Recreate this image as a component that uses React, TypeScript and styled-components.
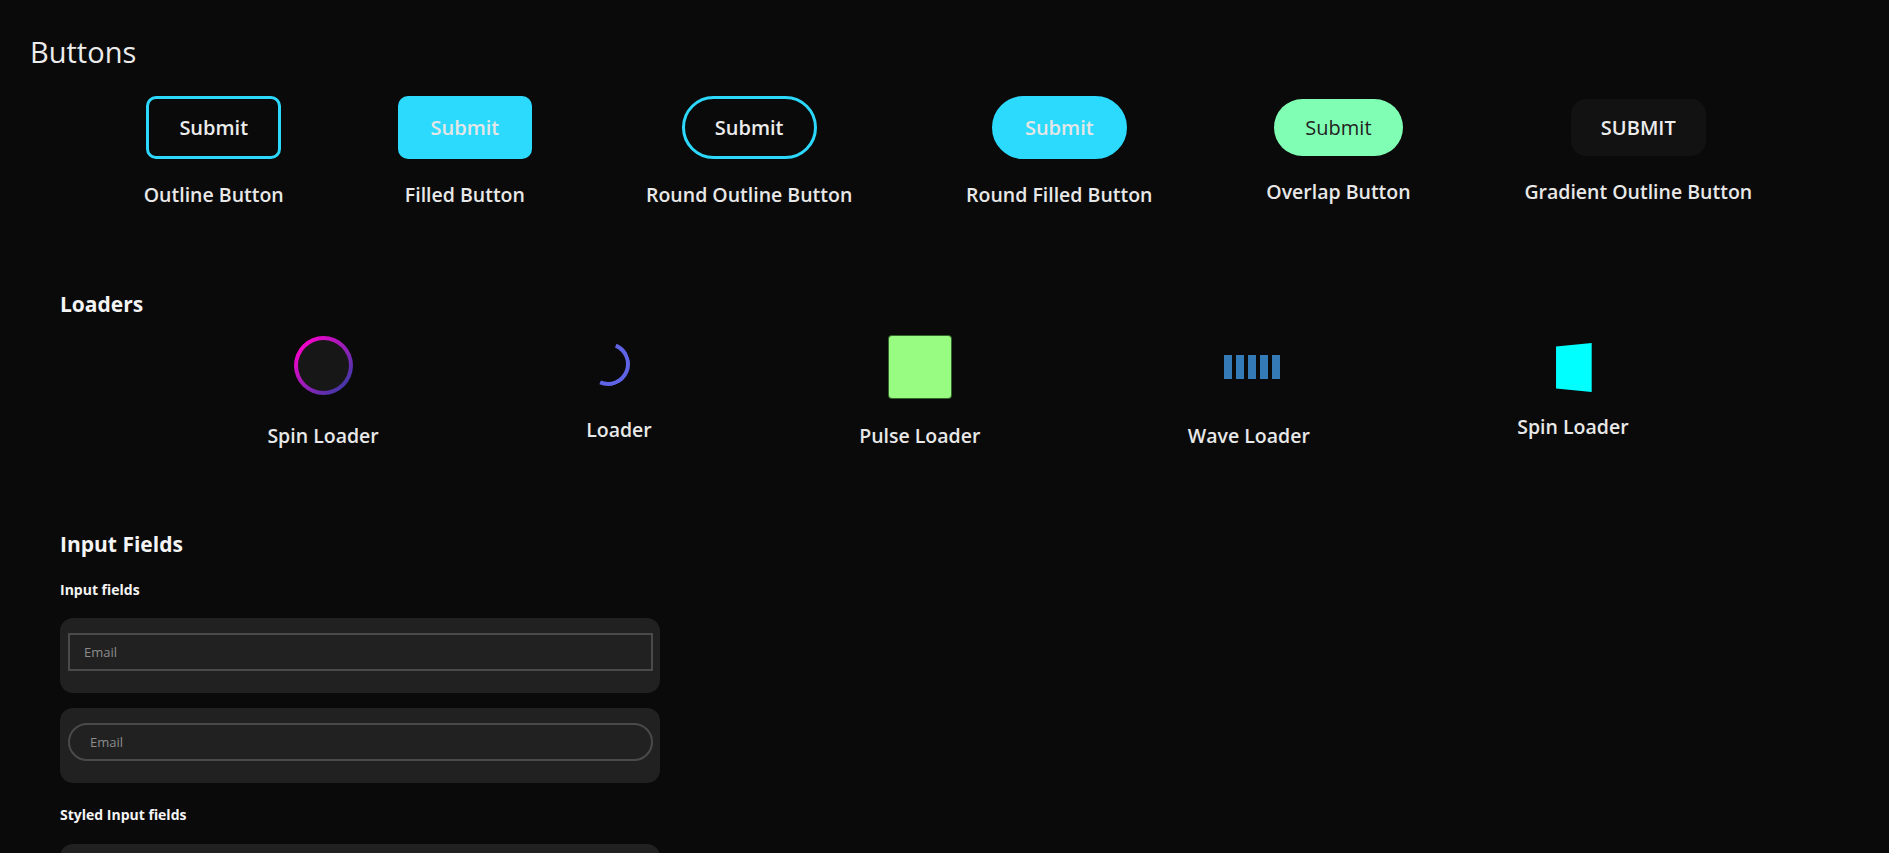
import styled, { createGlobalStyle } from "styled-components";

const GlobalStyle = createGlobalStyle`
  html, body {
    margin: 0;
    padding: 0;
    background: #0a0a0a;
  }
  body {
    font-family: "Open Sans", "Noto Sans", sans-serif;
    color: #ececec;
  }
`;

const Page = styled.div`
  padding: 34px 23px 0 30px;
  min-height: 853px;
  box-sizing: border-box;
`;

const PageTitle = styled.h2`
  margin: 0;
  font-size: 29px;
  font-weight: 500;
  line-height: 35px;
  color: #ececec;
`;

const ButtonRow = styled.div`
  display: flex;
  justify-content: space-evenly;
  align-items: center;
  margin-top: 27px;
`;

const Item = styled.div<{ $gap: number; $align?: string }>`
  display: flex;
  flex-direction: column;
  align-items: ${(p) => p.$align || "center"};
  gap: ${(p) => p.$gap}px;
`;

const Label = styled.div`
  font-size: 19.5px;
  font-weight: 600;
  line-height: 24px;
  color: #e8e8e8;
  white-space: nowrap;
`;

const BaseButton = styled.button`
  font-family: inherit;
  font-size: 20px;
  font-weight: 600;
  line-height: 27px;
  padding: 0 30px;
  cursor: pointer;
  box-sizing: border-box;
`;

const OutlineButton = styled(BaseButton)<{ $round?: boolean }>`
  height: 63px;
  background: transparent;
  color: #ececec;
  border: 3px solid #2cd9fd;
  border-radius: ${(p) => (p.$round ? "32px" : "10px")};
`;

const FilledButton = styled(BaseButton)<{ $round?: boolean }>`
  height: 63px;
  background: #2cdafe;
  color: #e6e6e6;
  border: 3px solid #2cdafe;
  border-radius: ${(p) => (p.$round ? "32px" : "10px")};
`;

const OverlapButton = styled(BaseButton)`
  height: 57px;
  padding: 0 31px;
  border: none;
  border-radius: 29px;
  background: #80ffb4;
  color: #222;
  font-weight: 500;
`;

const GradientButton = styled(BaseButton)`
  height: 57px;
  border: none;
  border-radius: 15px;
  background: #121212;
  color: #ececec;
`;

const Section = styled.section<{ $top: number }>`
  padding: 0 30px;
  margin-top: ${(p) => p.$top}px;
`;

const SectionTitle = styled.h3`
  margin: 0;
  font-size: 21px;
  font-weight: 700;
  line-height: 25px;
  color: #f4f4f4;
`;

const LoaderRow = styled.div`
  display: flex;
  justify-content: space-evenly;
  align-items: center;
  margin-top: 19px;
`;

const SpinRing = styled.div`
  width: 59px;
  height: 59px;
  box-sizing: border-box;
  border-radius: 50%;
  border: 4px solid transparent;
  background: linear-gradient(#171717, #171717) padding-box,
    linear-gradient(135deg, #ff00cc 10%, #3a3aa6 90%) border-box;
`;

const ArcLoader = styled.div`
  width: 44px;
  height: 44px;
  box-sizing: border-box;
  border-radius: 50%;
  border: 4px solid transparent;
  border-right-color: #5f63e6;
  border-bottom-color: #5f63e6;
  transform: rotate(-22deg);
`;

const PulseBox = styled.div`
  width: 62px;
  height: 62px;
  border-radius: 3px;
  background: #98fb82;
  box-shadow: 0 0 0 1px rgba(70, 140, 55, 0.7);
`;

const WaveBox = styled.div`
  height: 60px;
  display: flex;
  align-items: center;
  gap: 4px;
  margin-left: 6px;
`;

const WaveBar = styled.span`
  display: block;
  width: 8px;
  height: 24px;
  background: #337ab7;
`;

const FlipSquare = styled.div`
  width: 45px;
  height: 45px;
  background: #00ffff;
  transform: perspective(180px) rotateY(-38deg);
`;

const SubTitle = styled.h4<{ $top: number }>`
  margin: ${(p) => p.$top}px 0 0;
  font-size: 14px;
  font-weight: 700;
  line-height: 17px;
  color: #f4f4f4;
`;

const FieldBox = styled.div<{ $top: number }>`
  width: 600px;
  box-sizing: border-box;
  margin-top: ${(p) => p.$top}px;
  padding: 15px 7px 22px 8px;
  background: #212121;
  border-radius: 13px;
`;

const TextInput = styled.input<{ $round?: boolean }>`
  display: block;
  width: 100%;
  height: 38px;
  box-sizing: border-box;
  margin: 0;
  padding: 0 0 0 ${(p) => (p.$round ? "20px" : "14px")};
  border: 2px solid #4a4a4a;
  border-radius: ${(p) => (p.$round ? "19px" : "0")};
  background: transparent;
  color: #ddd;
  font-family: inherit;
  font-size: 13px;
  outline: none;
  &::placeholder {
    color: #8c8c8c;
  }
`;

const buttons = [
  { label: "Outline Button", el: <OutlineButton>Submit</OutlineButton> },
  { label: "Filled Button", el: <FilledButton>Submit</FilledButton> },
  { label: "Round Outline Button", el: <OutlineButton $round>Submit</OutlineButton> },
  { label: "Round Filled Button", el: <FilledButton $round>Submit</FilledButton> },
  { label: "Overlap Button", el: <OverlapButton>Submit</OverlapButton> },
  { label: "Gradient Outline Button", el: <GradientButton>SUBMIT</GradientButton> },
];

export default function App() {
  return (
    <Page>
      <GlobalStyle />
      <PageTitle>Buttons</PageTitle>
      <ButtonRow>
        {buttons.map((b) => (
          <Item key={b.label} $gap={24}>
            {b.el}
            <Label>{b.label}</Label>
          </Item>
        ))}
      </ButtonRow>

      <Section $top={85}>
        <SectionTitle>Loaders</SectionTitle>
        <LoaderRow>
          <Item $gap={29}>
            <SpinRing />
            <Label>Spin Loader</Label>
          </Item>
          <Item $gap={32} $align="flex-start">
            <ArcLoader />
            <Label>Loader</Label>
          </Item>
          <Item $gap={26}>
            <PulseBox />
            <Label>Pulse Loader</Label>
          </Item>
          <Item $gap={27}>
            <WaveBox>
              {[0, 1, 2, 3, 4].map((i) => (
                <WaveBar key={i} />
              ))}
            </WaveBox>
            <Label>Wave Loader</Label>
          </Item>
          <Item $gap={25}>
            <FlipSquare />
            <Label>Spin Loader</Label>
          </Item>
        </LoaderRow>
      </Section>

      <Section $top={84}>
        <SectionTitle>Input Fields</SectionTitle>
        <SubTitle $top={24}>Input fields</SubTitle>
        <FieldBox $top={20}>
          <TextInput placeholder="Email" />
        </FieldBox>
        <FieldBox $top={15}>
          <TextInput $round placeholder="Email" />
        </FieldBox>
        <SubTitle $top={23}>Styled Input fields</SubTitle>
        <FieldBox $top={21}>
          <TextInput placeholder="Email" />
        </FieldBox>
      </Section>
    </Page>
  );
}
